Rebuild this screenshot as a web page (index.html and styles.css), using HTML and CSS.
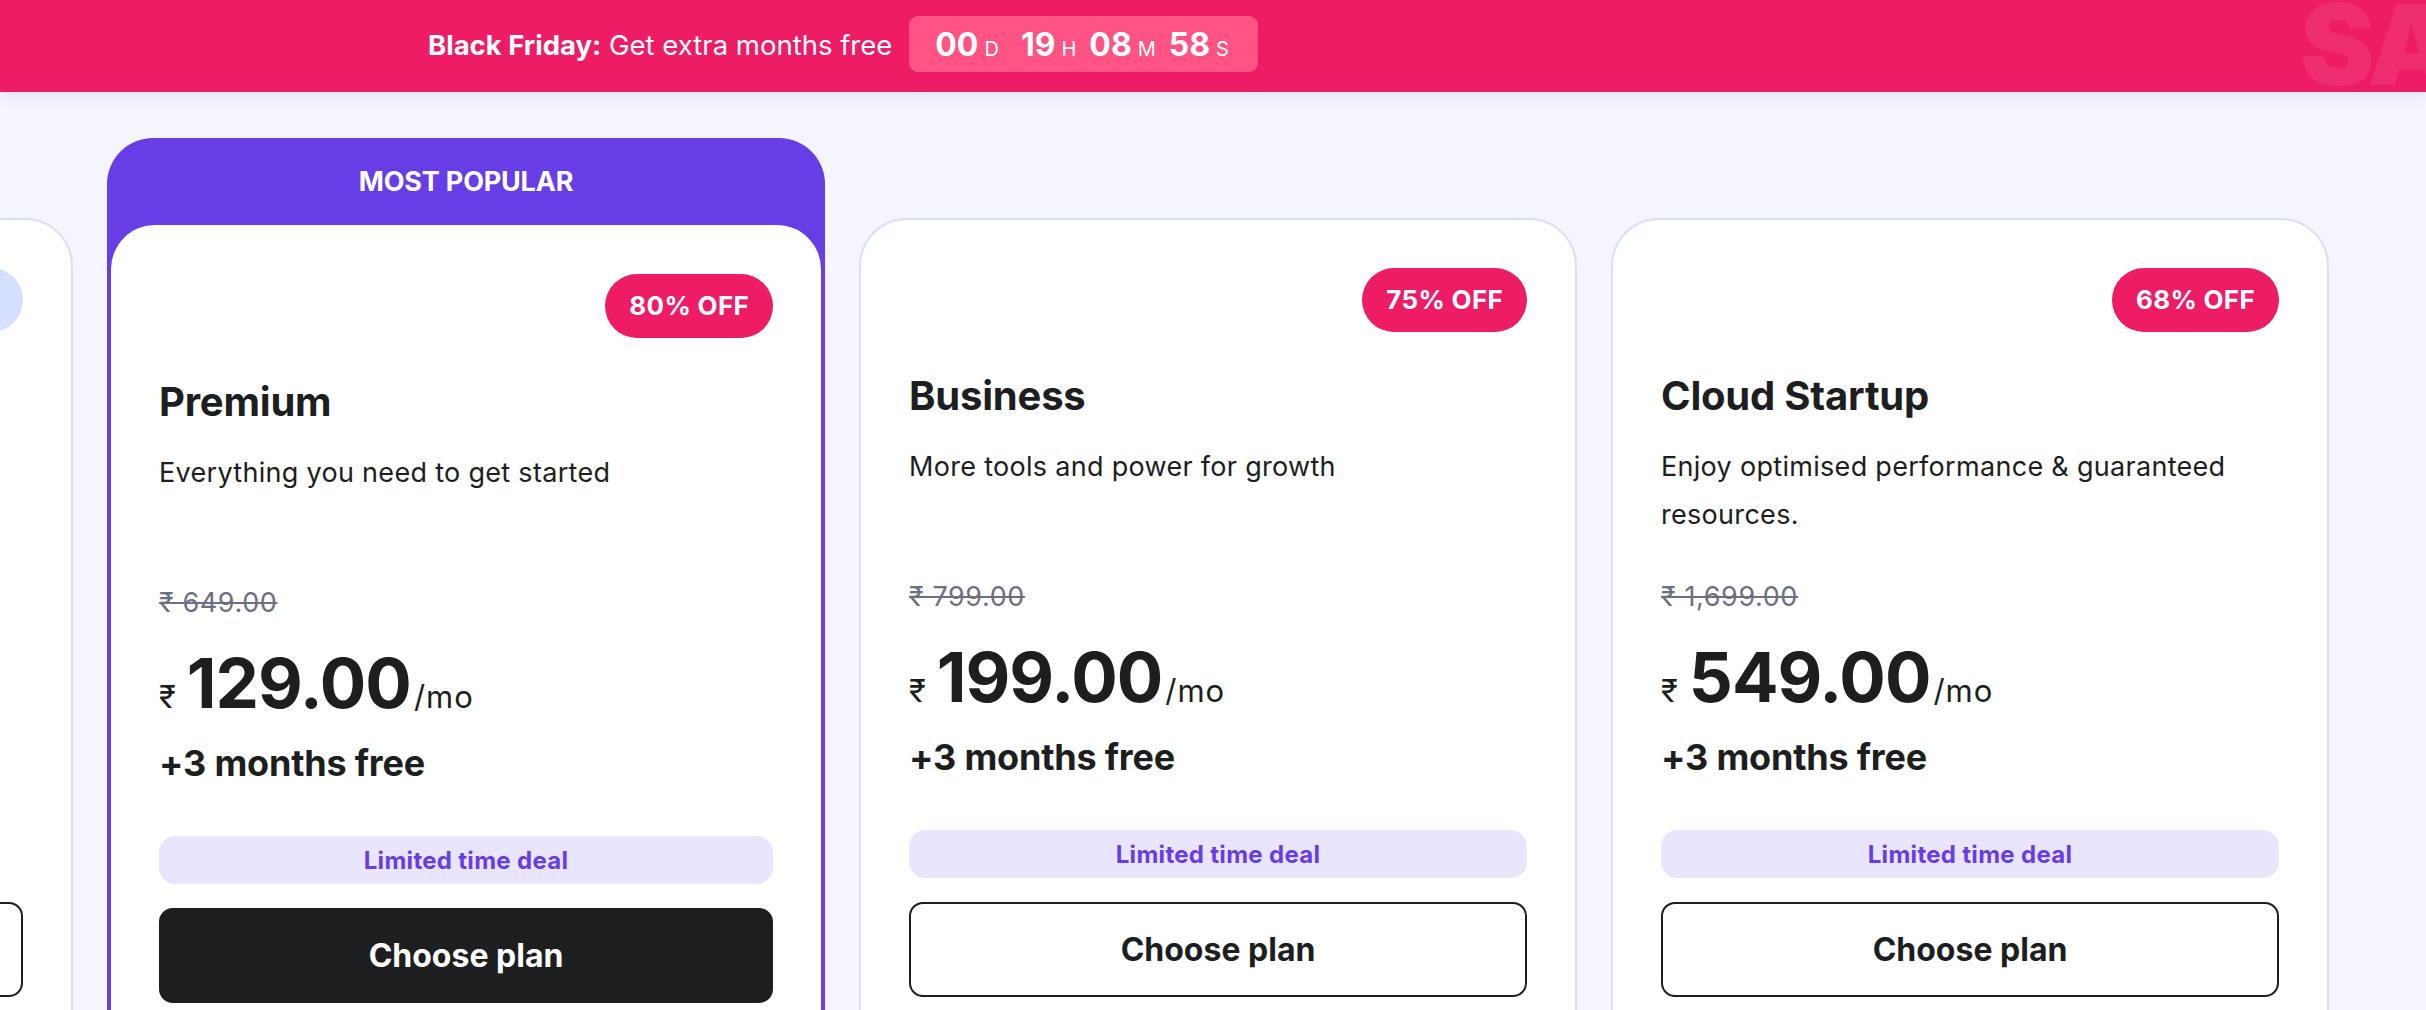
FILE: index.html
```html
<!DOCTYPE html>
<html lang="en">
<head>
<meta charset="utf-8">
<title>Pricing</title>
<link rel="stylesheet" href="styles.css">
</head>
<body>
<header class="promo">
  <p class="promo-text"><strong>Black Friday:</strong> Get extra months free</p>
  <div class="timer">
    <span class="t-group t-days"><span class="t-num">00</span><span class="t-unit">D</span></span>
    <span class="t-group"><span class="t-num">19</span><span class="t-unit">H</span></span>
    <span class="t-group"><span class="t-num">08</span><span class="t-unit">M</span></span>
    <span class="t-group"><span class="t-num">58</span><span class="t-unit">S</span></span>
  </div>
  <div class="promo-art" aria-hidden="true">SALE</div>
</header>

<main class="pricing">
  <div class="track">
    <article class="card card-ghost" aria-hidden="true">
      <div class="badge-row"><span class="badge badge-ghost"></span></div>
      <div class="plan-title">&nbsp;</div>
      <div class="plan-desc">&nbsp;</div>
      <div class="old-price">&nbsp;</div>
      <div class="price"><span class="amount">&nbsp;</span></div>
      <div class="bonus">&nbsp;</div>
      <div class="deal deal-hidden">&nbsp;</div>
      <div class="btn">&nbsp;</div>
    </article>

    <article class="popular">
      <div class="popular-label">MOST POPULAR</div>
      <div class="card card-inner">
        <div class="badge-row"><span class="badge">80% OFF</span></div>
        <h2 class="plan-title">Premium</h2>
        <p class="plan-desc">Everything you need to get started</p>
        <p class="old-price">₹ 649.00</p>
        <div class="price"><span class="cur">₹</span><span class="amount">129.00</span><span class="per">/mo</span></div>
        <p class="bonus">+3 months free</p>
        <div class="deal">Limited time deal</div>
        <button class="btn btn-dark">Choose plan</button>
      </div>
    </article>

    <article class="card">
      <div class="badge-row"><span class="badge">75% OFF</span></div>
      <h2 class="plan-title">Business</h2>
      <p class="plan-desc">More tools and power for growth</p>
      <p class="old-price">₹ 799.00</p>
      <div class="price"><span class="cur">₹</span><span class="amount">199.00</span><span class="per">/mo</span></div>
      <p class="bonus">+3 months free</p>
      <div class="deal">Limited time deal</div>
      <button class="btn">Choose plan</button>
    </article>

    <article class="card">
      <div class="badge-row"><span class="badge">68% OFF</span></div>
      <h2 class="plan-title">Cloud Startup</h2>
      <p class="plan-desc">Enjoy optimised performance &amp; guaranteed resources.</p>
      <p class="old-price">₹ 1,699.00</p>
      <div class="price"><span class="cur">₹</span><span class="amount">549.00</span><span class="per">/mo</span></div>
      <p class="bonus">+3 months free</p>
      <div class="deal">Limited time deal</div>
      <button class="btn">Choose plan</button>
    </article>
  </div>
</main>
</body>
</html>
```

FILE: styles.css
```css
html, body {
  margin: 0;
  padding: 0;
}

body {
  background: #F4F5FF;
  font-family: Inter, "Noto Sans", "Liberation Sans", sans-serif;
  color: #1D1E20;
  height: 1010px;
  overflow: hidden;
}

/* ---------- promo banner ---------- */
.promo {
  position: relative;
  z-index: 2;
  height: 92px;
  box-sizing: border-box;
  background: #ED1C64;
  display: flex;
  align-items: flex-start;
  padding: 16px 0 0 428px;
  overflow: hidden;
  box-shadow: 0 3px 14px rgba(40, 40, 80, 0.10);
  color: #fff;
}

.promo-text {
  margin: 0 17px 0 0;
  padding-top: 3px;
  font-size: 27.5px;
  line-height: 52px;
  font-weight: 400;
  letter-spacing: 0;
}

.promo-text strong {
  font-weight: 700;
}

.timer {
  display: flex;
  align-items: center;
  height: 56px;
  box-sizing: border-box;
  padding: 0 29px 0 26px;
  background: #FE5383;
  border-radius: 9px;
  gap: 13px;
}

.t-days {
  margin-right: 9px;
}

.t-group {
  display: flex;
  align-items: baseline;
  gap: 6px;
}

.t-num {
  font-size: 32px;
  font-weight: 700;
  letter-spacing: 0;
}

.t-unit {
  font-size: 20px;
  font-weight: 400;
}

.promo-art {
  position: absolute;
  left: 2300px;
  top: -12px;
  font-size: 112px;
  font-weight: 900;
  line-height: 1;
  letter-spacing: -4px;
  color: rgba(255, 255, 255, 0.08);
  white-space: nowrap;
}

/* ---------- pricing cards ---------- */
.pricing {
  padding-top: 46px;
}

.track {
  display: flex;
  align-items: flex-start;
  gap: 34px;
  margin-left: -645px;
}

.card {
  flex: none;
  width: 718px;
  box-sizing: border-box;
  background: #fff;
  border: 2px solid #D8DEFE;
  border-radius: 48px;
  padding: 48px 48px 60px;
  margin-top: 80px;
}

.popular {
  flex: none;
  width: 718px;
  box-sizing: border-box;
  background: #673DE6;
  border-radius: 46px;
  padding: 0 4px 4px;
}

.popular-label {
  height: 87px;
  display: flex;
  align-items: center;
  justify-content: center;
  color: #fff;
  font-size: 27px;
  font-weight: 700;
  letter-spacing: -0.2px;
}

.card-inner {
  width: auto;
  border: none;
  margin-top: 0;
  border-radius: 44px;
  padding: 49px 48px 60px 48px;
}

.badge-row {
  display: flex;
  justify-content: flex-end;
  height: 64px;
}

.badge {
  height: 64px;
  padding: 0 24px;
  border-radius: 32px;
  background: #ED1C64;
  color: #fff;
  font-size: 26px;
  font-weight: 700;
  line-height: 64px;
  letter-spacing: 0.3px;
}

.badge-ghost {
  width: 170px;
  padding: 0;
  background: #D5DFFF;
}

.plan-title {
  margin: 40px 0 0;
  font-size: 40px;
  line-height: 48px;
  font-weight: 700;
  letter-spacing: -0.2px;
}

.plan-desc {
  margin: 23px 0 0;
  height: 96px;
  font-size: 27px;
  line-height: 48px;
  font-weight: 400;
  letter-spacing: 0.3px;
}

.old-price {
  margin: 40px 0 0;
  font-size: 27px;
  line-height: 36px;
  letter-spacing: 0.6px;
  color: #6D7081;
  text-decoration: line-through;
  text-decoration-thickness: 2px;
}

.price {
  margin-top: 28px;
  height: 68px;
  display: flex;
  align-items: baseline;
  line-height: 1;
}

.cur {
  font-size: 31px;
  margin-right: 11px;
}

.amount {
  font-size: 69px;
  font-weight: 700;
  letter-spacing: -1px;
}

.per {
  font-size: 31px;
  margin-left: 3px;
  letter-spacing: 1px;
}

.bonus {
  margin: 24px 0 0;
  font-size: 36px;
  line-height: 44px;
  font-weight: 700;
  letter-spacing: -0.2px;
}

.deal {
  margin-top: 51px;
  height: 48px;
  border-radius: 16px;
  background: #EAE5FE;
  color: #673DE6;
  font-size: 24px;
  font-weight: 700;
  letter-spacing: 0.3px;
  display: flex;
  align-items: center;
  justify-content: center;
}

.deal-hidden {
  visibility: hidden;
}

.btn {
  display: block;
  margin-top: 24px;
  width: 100%;
  height: 95px;
  box-sizing: border-box;
  border: 2px solid #1D1E20;
  border-radius: 14px;
  background: #fff;
  color: #1D1E20;
  font-family: inherit;
  font-size: 32px;
  font-weight: 700;
  cursor: pointer;
}

.btn-dark {
  background: #1D1E20;
  color: #fff;
}
```
